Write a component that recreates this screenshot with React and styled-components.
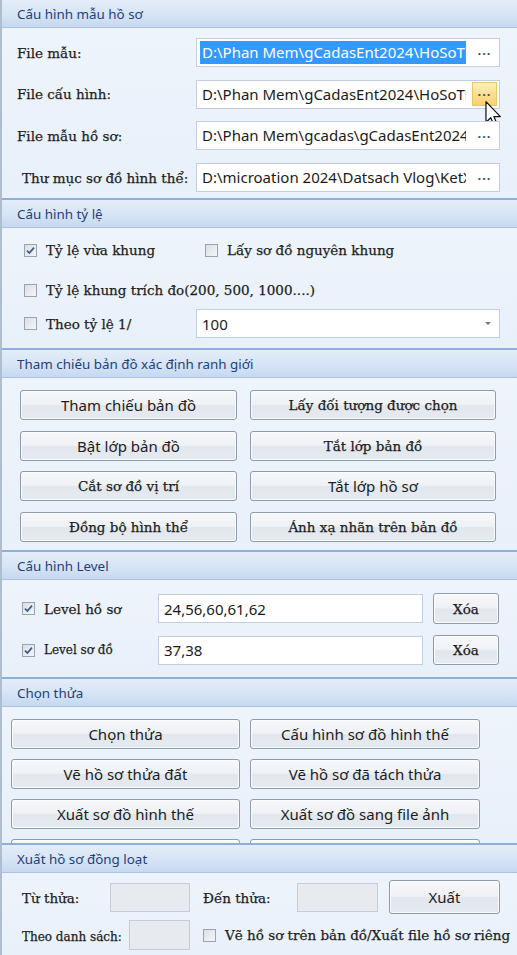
import styled, { createGlobalStyle } from 'styled-components';

const GlobalStyle = createGlobalStyle`
  body {
    margin: 0;
    background: #e9f1fb;
    font-family: "Noto Sans", "DejaVu Sans", sans-serif;
  }
`;

const SANS = `"Noto Sans", "DejaVu Sans", sans-serif`;
const SERIF = `"DejaVu Serif", "Liberation Serif", serif`;

const Window = styled.div`
  width: 517px;
  height: 955px;
  overflow: hidden;
  box-sizing: border-box;
  border-left: 2px solid #aebdd0;
  background: #ebf2fb;
  display: flex;
  flex-direction: column;
`;

const Section = styled.section`
  flex-shrink: 0;
  border-bottom: 2px solid #8eafd9;
  &:last-child {
    border-bottom: 0;
  }
`;

const Header = styled.div`
  height: 28px;
  box-sizing: border-box;
  display: flex;
  align-items: center;
  padding-left: 15px;
  border-bottom: 1px solid #a9c2e2;
  background: linear-gradient(180deg, #e4edf8 0%, #d6e4f5 55%, #c6d9f0 100%);
  color: #1d3f7e;
  font-family: ${SANS};
  font-size: 13.4px;
`;

const Body = styled.div`
  height: ${(p) => p.$h}px;
  box-sizing: border-box;
  overflow: hidden;
  padding: ${(p) => p.$pad};
  background: linear-gradient(180deg, #eef4fb 0%, #e8f0fa 100%);
`;

// cấu hình mẫu hồ sơ
const FieldGrid = styled.div`
  display: grid;
  grid-template-columns: 179px 304px;
  grid-auto-rows: 29px;
  row-gap: 12.7px;
  align-items: center;
`;

const Label = styled.span`
  font-family: ${SERIF};
  font-size: ${(p) => p.$size || 13.5}px;
  color: #1e1e1e;
  white-space: nowrap;
  padding-left: ${(p) => p.$indent || 0}px;
  -webkit-text-stroke: 0.25px #1e1e1e;
`;

const PathBox = styled.div`
  height: 29px;
  box-sizing: border-box;
  display: flex;
  align-items: center;
  gap: 6px;
  padding: 0 2px 0 3px;
  background: #fff;
  border: 1px solid #c2cedf;
  position: relative;
`;

const PathText = styled.div`
  flex: 1;
  min-width: 0;
  overflow: hidden;
  white-space: nowrap;
  height: 23px;
  line-height: 23px;
  padding-left: 2px;
  font-family: ${SANS};
  font-size: 15px;
  color: ${(p) => (p.$selected ? '#fff' : '#1b1b1b')};
  background: ${(p) => (p.$selected ? '#3399ff' : 'transparent')};
`;

const Dots = styled.div`
  width: 25px;
  height: 24px;
  box-sizing: border-box;
  display: flex;
  align-items: center;
  justify-content: center;
  font-family: ${SANS};
  font-size: 13px;
  font-weight: bold;
  letter-spacing: 1px;
  color: #3e526f;
  border: 1px solid ${(p) => (p.$hover ? '#e8c46c' : 'transparent')};
  background: ${(p) =>
    p.$hover ? 'linear-gradient(180deg, #fff1bd 0%, #fcdf8e 50%, #f8d173 100%)' : 'transparent'};
`;

const Cursor = styled.svg`
  position: absolute;
  left: 288px;
  top: 20px;
  pointer-events: none;
`;

// cấu hình tỷ lệ
const Stack = styled.div`
  display: flex;
  flex-direction: column;
  gap: ${(p) => p.$gap}px;
`;

const CheckRow = styled.div`
  display: flex;
  align-items: center;
  height: ${(p) => p.$h || 22}px;
  margin-top: ${(p) => p.$mt || 0}px;
`;

const CheckItem = styled.div`
  display: flex;
  align-items: center;
  gap: 9px;
  width: ${(p) => (p.$w ? `${p.$w}px` : 'auto')};
  flex-shrink: 0;
`;

const Box = styled.span`
  width: 13px;
  height: 13px;
  box-sizing: border-box;
  flex-shrink: 0;
  border: 1px solid #9aa3ae;
  background: linear-gradient(135deg, #dadfe5 0%, #f4f6f8 100%);
  display: flex;
  align-items: center;
  justify-content: center;
`;

const SelectBox = styled.div`
  width: 304px;
  height: 29px;
  box-sizing: border-box;
  display: flex;
  align-items: center;
  justify-content: space-between;
  padding: 0 8px 0 5px;
  background: #fff;
  border: 1px solid #c2cedf;
  font-family: ${SANS};
  font-size: 15px;
  color: #1b1b1b;
`;

const Arrow = styled.span`
  width: 0;
  height: 0;
  border-left: 3px solid transparent;
  border-right: 3px solid transparent;
  border-top: 3px solid #6f7782;
`;

// buttons
const ButtonGrid = styled.div`
  display: grid;
  grid-template-columns: ${(p) => p.$cols};
  grid-auto-rows: 30px;
  column-gap: ${(p) => p.$colGap}px;
  row-gap: ${(p) => p.$rowGap}px;
`;

const Button = styled.div`
  height: ${(p) => p.$h || 30}px;
  width: ${(p) => (p.$w ? `${p.$w}px` : 'auto')};
  box-sizing: border-box;
  flex-shrink: 0;
  display: flex;
  align-items: center;
  justify-content: center;
  border: 1px solid #8e9bad;
  border-radius: 3px;
  box-shadow: inset 0 0 0 1px #fbfcfd;
  background: linear-gradient(180deg, #f6f8fb 0%, #eef1f5 48%, #e2e7ee 52%, #e6eaf0 100%);
  font-family: ${(p) => (p.$serif ? SERIF : SANS)};
  font-size: ${(p) => (p.$serif ? 13.5 : 15)}px;
  color: #1c1c1c;
  white-space: nowrap;
  ${(p) => (p.$serif ? '-webkit-text-stroke: 0.25px #1c1c1c;' : '')}
`;

// cấu hình level
const LevelRow = styled.div`
  display: grid;
  grid-template-columns: 126px 265px 66px;
  column-gap: 10px;
  align-items: center;
  height: 30px;
`;

const TextBox = styled.div`
  height: ${(p) => p.$h || 29}px;
  width: ${(p) => (p.$w ? `${p.$w}px` : 'auto')};
  box-sizing: border-box;
  flex-shrink: 0;
  display: flex;
  align-items: center;
  padding-left: 5px;
  background: ${(p) => (p.$disabled ? '#e7eaee' : '#fff')};
  border: 1px solid ${(p) => (p.$disabled ? '#c3ccd8' : '#c2cedf')};
  font-family: ${SANS};
  font-size: 15px;
  color: #1b1b1b;
`;

// xuất hồ sơ đồng loạt
const FlowRow = styled.div`
  display: flex;
  align-items: center;
  height: ${(p) => p.$h}px;
`;

const Cell = styled.div`
  width: ${(p) => p.$w}px;
  flex-shrink: 0;
  margin-left: ${(p) => p.$ml || 0}px;
`;

const Check = ({ checked }) => (
  <Box>
    {checked && (
      <svg width="9" height="9" viewBox="0 0 9 9">
        <path d="M1 4.6 L3.4 7 L8 1.6" fill="none" stroke="#3d5a86" strokeWidth="1.7" />
      </svg>
    )}
  </Box>
);

const paths = [
  { label: 'File mẫu:', value: 'D:\\Phan Mem\\gCadasEnt2024\\HoSoThua', selected: true },
  { label: 'File cấu hình:', value: 'D:\\Phan Mem\\gCadasEnt2024\\HoSoThua', hover: true },
  { label: 'File mẫu hồ sơ:', value: 'D:\\Phan Mem\\gcadas\\gCadasEnt2024\\HoSo' },
  { label: 'Thư mục sơ đồ hình thể:', value: 'D:\\microation 2024\\Datsach Vlog\\KetXuat', indent: 5 },
];

const mapButtons = [
  { text: 'Tham chiếu bản đồ' },
  { text: 'Lấy đối tượng được chọn', serif: true },
  { text: 'Bật lớp bản đồ' },
  { text: 'Tắt lớp bản đồ', serif: true },
  { text: 'Cắt sơ đồ vị trí', serif: true },
  { text: 'Tắt lớp hồ sơ' },
  { text: 'Đồng bộ hình thể', serif: true },
  { text: 'Ánh xạ nhãn trên bản đồ', serif: true },
];

const parcelButtons = [
  'Chọn thửa',
  'Cấu hình sơ đồ hình thế',
  'Vẽ hồ sơ thửa đất',
  'Vẽ hồ sơ đã tách thửa',
  'Xuất sơ đồ hình thế',
  'Xuất sơ đồ sang file ảnh',
  'In hồ sơ',
  'In sơ đồ',
];

const App = () => {
  return (
    <>
      <GlobalStyle />
      <Window>
        <Section>
          <Header>Cấu hình mẫu hồ sơ</Header>
          <Body $h={170} $pad="10px 0 0 15px">
            <FieldGrid>
              {paths.map((p) => [
                <Label key={p.label} $indent={p.indent}>
                  {p.label}
                </Label>,
                <PathBox key={p.label + '-box'}>
                  <PathText $selected={p.selected}>{p.value}</PathText>
                  <Dots $hover={p.hover}>···</Dots>
                  {p.hover && (
                    <Cursor width="17" height="26" viewBox="0 0 12 19">
                      <path
                        d="M0.5 0.5 L0.5 15.5 L4 12.2 L6.6 18.2 L8.8 17.3 L6.3 11.4 L11 11.4 Z"
                        fill="#fff"
                        stroke="#111"
                        strokeWidth="0.9"
                        strokeLinejoin="round"
                      />
                    </Cursor>
                  )}
                </PathBox>,
              ])}
            </FieldGrid>
          </Body>
        </Section>

        <Section>
          <Header>Cấu hình tỷ lệ</Header>
          <Body $h={120} $pad="11px 0 0 22px">
            <Stack $gap={18}>
              <CheckRow>
                <CheckItem $w={181}>
                  <Check checked />
                  <Label>Tỷ lệ vừa khung</Label>
                </CheckItem>
                <CheckItem>
                  <Check />
                  <Label>Lấy sơ đồ nguyên khung</Label>
                </CheckItem>
              </CheckRow>
              <CheckRow>
                <CheckItem>
                  <Check />
                  <Label>Tỷ lệ khung trích đo(200, 500, 1000....)</Label>
                </CheckItem>
              </CheckRow>
              <CheckRow $h={29} $mt={-10}>
                <CheckItem $w={172}>
                  <Check />
                  <Label>Theo tỷ lệ 1/</Label>
                </CheckItem>
                <SelectBox>
                  100
                  <Arrow />
                </SelectBox>
              </CheckRow>
            </Stack>
          </Body>
        </Section>

        <Section>
          <Header>Tham chiếu bản đồ xác định ranh giới</Header>
          <Body $h={172} $pad="12px 0 0 18px">
            <ButtonGrid $cols="217px 246px" $colGap={13} $rowGap={10.5}>
              {mapButtons.map((b) => (
                <Button key={b.text} $serif={b.serif}>
                  {b.text}
                </Button>
              ))}
            </ButtonGrid>
          </Body>
        </Section>

        <Section>
          <Header>Cấu hình Level</Header>
          <Body $h={97} $pad="13px 0 0 20px">
            <Stack $gap={12}>
              <LevelRow>
                <CheckItem>
                  <Check checked />
                  <Label>Level hồ sơ</Label>
                </CheckItem>
                <TextBox>24,56,60,61,62</TextBox>
                <Button $h={31} $serif>
                  Xóa
                </Button>
              </LevelRow>
              <LevelRow>
                <CheckItem>
                  <Check checked />
                  <Label $size={12}>Level sơ đồ</Label>
                </CheckItem>
                <TextBox>37,38</TextBox>
                <Button $h={30} $serif>
                  Xóa
                </Button>
              </LevelRow>
            </Stack>
          </Body>
        </Section>

        <Section>
          <Header>Chọn thửa</Header>
          <Body $h={136} $pad="12px 0 0 9px">
            <ButtonGrid $cols="229px 230px" $colGap={10} $rowGap={10}>
              {parcelButtons.map((t) => (
                <Button key={t}>{t}</Button>
              ))}
            </ButtonGrid>
          </Body>
        </Section>

        <Section>
          <Header>Xuất hồ sơ đồng loạt</Header>
          <Body $h={82} $pad="7px 0 0 20px">
            <Stack $gap={6}>
              <FlowRow $h={34}>
                <Cell $w={88}>
                  <Label>Từ thửa:</Label>
                </Cell>
                <TextBox $w={80} $disabled />
                <Cell $w={94} $ml={13}>
                  <Label>Đến thửa:</Label>
                </Cell>
                <TextBox $w={81} $disabled />
                <Cell $w={111} $ml={11}>
                  <Button $h={34}>Xuất</Button>
                </Cell>
              </FlowRow>
              <FlowRow $h={30}>
                <Cell $w={107}>
                  <Label $size={12}>Theo danh sách:</Label>
                </Cell>
                <TextBox $w={61} $h={30} $disabled />
                <Cell $w={320} $ml={13}>
                  <CheckItem>
                    <Check />
                    <Label>Vẽ hồ sơ trên bản đồ/Xuất file hồ sơ riêng</Label>
                  </CheckItem>
                </Cell>
              </FlowRow>
            </Stack>
          </Body>
        </Section>
      </Window>
    </>
  );
};

export default App;
